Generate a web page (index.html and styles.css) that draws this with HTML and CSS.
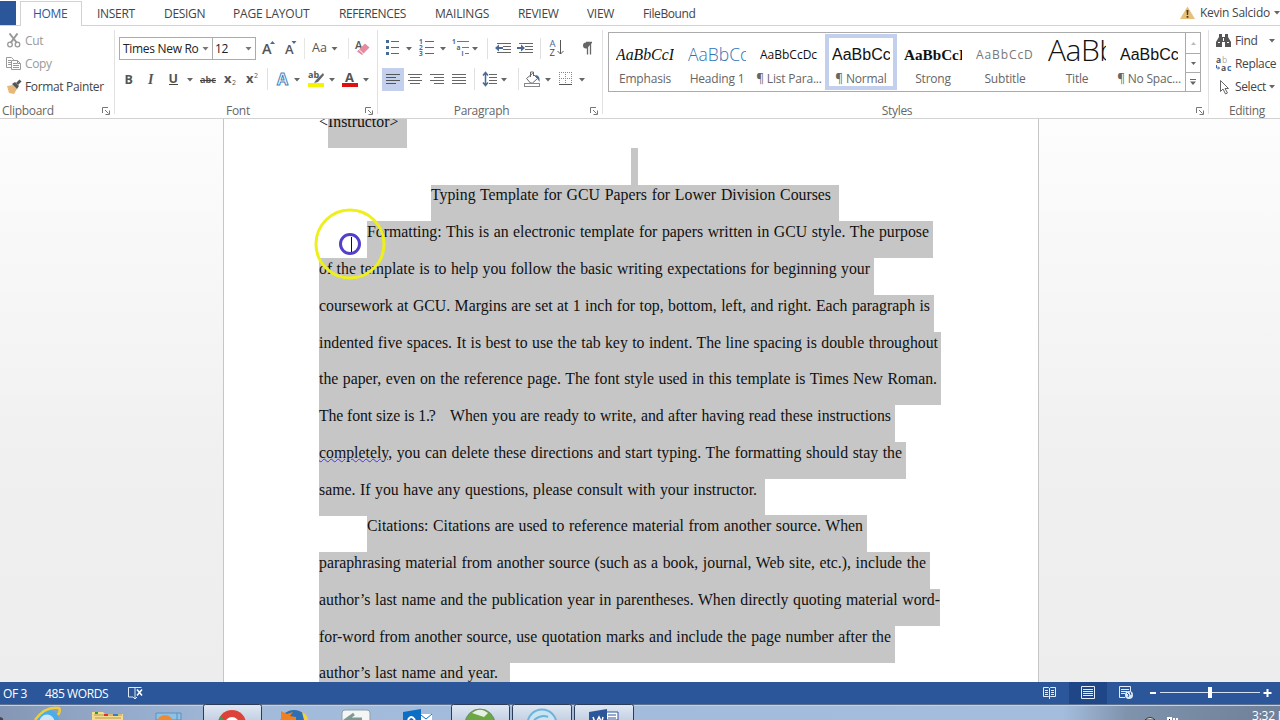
FILE: index.html
```html
<!DOCTYPE html>
<html lang="en">
<head>
<meta charset="utf-8">
<title>Word</title>
<link rel="stylesheet" href="styles.css">
</head>
<body>
<div class="app">
  <nav class="tabs">
    <span class="file"></span>
    <span class="tab active">HOME</span>
    <span class="tab t-insert">INSERT</span>
    <span class="tab t-design">DESIGN</span>
    <span class="tab t-layout">PAGE LAYOUT</span>
    <span class="tab t-refs">REFERENCES</span>
    <span class="tab t-mail">MAILINGS</span>
    <span class="tab t-review">REVIEW</span>
    <span class="tab t-view">VIEW</span>
    <span class="tab t-fb">FileBound</span>
    <span class="user">
      <svg width="15" height="13" viewBox="0 0 15 13"><path d="M7.5 0.5L15 13H0z" fill="#e8c078"/><path d="M6.5 4h2l-.4 5h-1.2z M6.6 10h1.8v1.8H6.6z" fill="#4a3a20"/></svg>
      <span class="uname">Kevin Salcido</span>
      <svg width="6" height="4" viewBox="0 0 6 4"><path d="M0 0h6L3 3.5z" fill="#666"/></svg>
    </span>
  </nav>

  <div class="ribbon">
    <section class="group clipboard">
      <div class="body">
        <div class="cmd dim"><svg width="16" height="16" viewBox="6 33 16 16"><path d="M9.500 33.500L17 43M17.500 33.500L10.500 43" stroke="#999" stroke-width="2" fill="none"/><circle cx="10" cy="44.500" r="2.300" fill="none" stroke="#999" stroke-width="1.300"/><circle cx="17.500" cy="44.500" r="2.300" fill="none" stroke="#999" stroke-width="1.300"/></svg><span>Cut</span></div>
        <div class="cmd dim"><svg width="16" height="16" viewBox="6 56 16 16"><path d="M6.500 57.500h5l2 2v8h-7z" fill="#fff" stroke="#999"/><path d="M8 60.500h3M8 62.500h3M8 64.500h3" stroke="#999"/><path d="M11.500 60.500h6l3 3v6h-9z" fill="#fff" stroke="#999"/><path d="M13 63.500h4M13 65.500h6M13 67.500h6M17.500 60.500v3h3" stroke="#999" fill="none"/></svg><span>Copy</span></div>
        <div class="cmd"><svg width="16" height="16" viewBox="6 78 16 16"><path d="M7 85l6-1 4 4-3 5-5-1z" fill="#e8b878"/><path d="M12 83l3-2 4 4-2 3z" fill="#555"/><path d="M16 82l3.500-3.500 2 2L18 84z" fill="#555"/></svg><span>Format Painter</span></div>
      </div>
      <div class="label">Clipboard<svg class="launch" width="8" height="8" viewBox="0 0 8 8"><path d="M.5 6V.5H6M3 3l3.500 3.500M7.500 3.500v4h-4" fill="none" stroke="#777"/></svg></div>
    </section>

    <section class="group font">
      <div class="body">
        <div class="row r1">
          <span class="combo face"><span>Times New Ro</span><svg width="7" height="4" viewBox="0 0 7 4"><path d="M.5 0h6l-3 3.500z" fill="#777"/></svg></span>
          <span class="combo size"><span>12</span><svg width="7" height="4" viewBox="0 0 7 4"><path d="M.5 0h6l-3 3.500z" fill="#777"/></svg></span>
          <svg width="26" height="23" viewBox="256 37 26 23"><text x="262" y="54" class="g g16">A</text><path d="M270 44l2.500-3 2.500 3z" fill="#476a96"/></svg>
          <svg width="22" height="23" viewBox="282 37 22 23"><text x="285" y="54" class="g g13">A</text><path d="M291.500 41h5l-2.500 3z" fill="#476a96"/></svg>
          <svg width="44" height="23" viewBox="304 37 44 23"><path d="M304.500 38v21" stroke="#e6e6e6"/><text x="312" y="52" class="g g12">Aa</text><path d="M331.500 47h6l-3 3.500z" fill="#666"/></svg>
          <svg width="28" height="23" viewBox="348 37 28 23"><path d="M348.500 38v21" stroke="#e6e6e6"/><text x="355" y="49" class="g g11">A</text><path d="M357 51.500l8-8 4.500 4-7.500 7.500z" fill="#e58a9f"/><path d="M359 49.500l4.500 4.500" stroke="#fff"/></svg>
        </div>
        <div class="row r2">
          <svg width="21" height="24" viewBox="119 67 21 24"><text x="124.500" y="83.500" class="g b g12">B</text></svg>
          <svg width="22" height="24" viewBox="140 67 22 24"><text x="148" y="83.500" class="g i g14">I</text></svg>
          <svg width="34" height="24" viewBox="162 67 34 24"><text x="168.500" y="83" class="g b g12">U</text><path d="M169 84.500h9" stroke="#444"/><path d="M187 78h6l-3 3.500z" fill="#666"/></svg>
          <svg width="23" height="24" viewBox="196 67 23 24"><text x="200" y="83" class="g b g10">abc</text><path d="M200 80.500h16" stroke="#444"/></svg>
          <svg width="22" height="24" viewBox="219 67 22 24"><text x="224" y="83" class="g b g13">x</text><text x="232" y="85" class="g g7">2</text></svg>
          <svg width="26" height="24" viewBox="241 67 26 24"><text x="246" y="83" class="g b g13">x</text><text x="254" y="78" class="g g7">2</text></svg>
          <svg width="38" height="24" viewBox="267 67 38 24"><path d="M267.500 68v22" stroke="#e0e0e0"/><text x="277" y="84.500" class="fx">A</text><path d="M294 78h6l-3 3.500z" fill="#666"/></svg>
          <svg width="35" height="24" viewBox="305 67 35 24"><rect x="308" y="83" width="16" height="4" fill="#f4f400"/><text x="308" y="78" class="g b g10">ab</text><path d="M323 73l-7 7-2 3 4-1 6-7z" fill="#666"/><path d="M329 78h6l-3 3.500z" fill="#666"/></svg>
          <svg width="37" height="24" viewBox="340 67 37 24"><rect x="342" y="83" width="16" height="4" fill="#e01010"/><text x="345" y="82" class="g b g13">A</text><path d="M363 78h6l-3 3.500z" fill="#666"/></svg>
        </div>
      </div>
      <div class="label">Font<svg class="launch" width="8" height="8" viewBox="0 0 8 8"><path d="M.5 6V.5H6M3 3l3.500 3.500M7.500 3.500v4h-4" fill="none" stroke="#777"/></svg></div>
    </section>

    <section class="group para">
      <div class="body">
        <div class="row r1">
          <svg width="33" height="23" viewBox="382 37 33 23"><path d="M386 41.500h3M386 47.500h3M386 53.500h3" stroke="#476a96" stroke-width="3"/><path d="M391 41.500h8M391 47.500h8M391 53.500h8" stroke="#666"/><path d="M406 47h6l-3 3.500z" fill="#666"/></svg>
          <svg width="35" height="23" viewBox="415 37 35 23"><text x="419" y="44" class="n">1</text><text x="419" y="50" class="n">2</text><text x="419" y="56" class="n">3</text><path d="M425 41.500h9M425 47.500h9M425 53.500h9" stroke="#666"/><path d="M440 47h6l-3 3.500z" fill="#666"/></svg>
          <svg width="37" height="23" viewBox="450 37 37 23"><text x="452" y="44" class="n">1</text><text x="456.500" y="50" class="n">a</text><text x="461.500" y="56" class="n">i</text><path d="M457 41.500h12M462 47.500h7M465 53.500h4" stroke="#777"/><path d="M472 47h6l-3 3.500z" fill="#666"/></svg>
          <svg width="27" height="23" viewBox="487 37 27 23"><path d="M487.500 38v21" stroke="#e0e0e0"/><path d="M497 43.500h14M503 46.500h8M503 49.500h8M497 52.500h14" stroke="#666"/><path d="M495 48l4-3.500V47h4v2h-4v2.500z" fill="#476a96"/></svg>
          <svg width="26" height="23" viewBox="514 37 26 23"><path d="M519 43.500h14M525 46.500h8M525 49.500h8M519 52.500h14" stroke="#666"/><path d="M525 48l-4-3.500V47h-4v2h4v2.500z" fill="#476a96"/></svg>
          <svg width="33" height="23" viewBox="540 37 33 23"><path d="M540.500 38v21" stroke="#e0e0e0"/><text x="549.500" y="47" class="az" fill="#476a96">A</text><text x="549.500" y="55.500" class="az" fill="#444">Z</text><path d="M560.500 40v14M557.500 51l3 3 3-3" stroke="#555" fill="none"/></svg>
          <svg width="24" height="23" viewBox="573 37 24 23"><path d="M592 42.500h-6a3 3 0 0 0 0 6h1z" fill="#666"/><path d="M587.500 42.500v12M590.500 42.500v12M586 42.500h6" stroke="#666" stroke-width="1.300"/></svg>
        </div>
        <div class="row r2">
          <svg width="22" height="24" viewBox="382 67 22 24"><rect x="382" y="68" width="22" height="23" fill="#c2d0ee"/><path d="M386 74.500h14M386 77.500h10M386 80.500h14M386 83.500h10" stroke="#555"/></svg>
          <svg width="22" height="24" viewBox="404 67 22 24"><path d="M408 74.500h14M410 77.500h10M408 80.500h14M410 83.500h10" stroke="#666"/></svg>
          <svg width="22" height="24" viewBox="426 67 22 24"><path d="M430 74.500h14M434 77.500h10M430 80.500h14M434 83.500h10" stroke="#666"/></svg>
          <svg width="26" height="24" viewBox="448 67 26 24"><path d="M452 74.500h14M452 77.500h14M452 80.500h14M452 83.500h14" stroke="#666"/></svg>
          <svg width="44" height="24" viewBox="474 67 44 24"><path d="M474.500 68v22" stroke="#e0e0e0"/><path d="M485.500 73v12M483 75.500l2.500-3 2.500 3M483 82.500l2.500 3 2.500-3" stroke="#476a96" stroke-width="1.500" fill="none"/><path d="M489 74.500h8M489 77.500h8M489 80.500h8M489 83.500h8" stroke="#666"/><path d="M501 78h6l-3 3.500z" fill="#666"/></svg>
          <svg width="36" height="24" viewBox="518 67 36 24"><path d="M518.500 68v22" stroke="#e0e0e0"/><path d="M526.500 78.500l6-5 5 5-5 4.500h-2z" fill="#fff" stroke="#666"/><path d="M530.500 77v-5h3v4" stroke="#666" fill="none"/><path d="M535 75c4 0 5 3 4.500 7l-2.500-4z" fill="#476a96"/><rect x="524.500" y="83.500" width="15" height="3" fill="#fff" stroke="#888"/><path d="M545 78h6l-3 3.500z" fill="#666"/></svg>
          <svg width="34" height="24" viewBox="554 67 34 24"><path d="M559 72.500h13M559 78.500h13M559.500 72v12M565.500 72v12M571.500 72v12" stroke="#888" stroke-dasharray="1 1"/><path d="M559 84.500h13" stroke="#555"/><path d="M579 78h6l-3 3.500z" fill="#666"/></svg>
        </div>
      </div>
      <div class="label">Paragraph<svg class="launch" width="8" height="8" viewBox="0 0 8 8"><path d="M.5 6V.5H6M3 3l3.500 3.500M7.500 3.500v4h-4" fill="none" stroke="#777"/></svg></div>
    </section>

    <section class="group styles">
      <div class="body">
        <div class="gallery">
          <div class="style"><span class="pv p-emph">AaBbCcI</span><span class="nm">Emphasis</span></div>
          <div class="style"><span class="pv p-h1">AaBbCc</span><span class="nm">Heading 1</span></div>
          <div class="style"><span class="pv p-list">AaBbCcDc</span><span class="nm">¶ List Para...</span></div>
          <div class="style sel"><span class="pv p-norm">AaBbCc</span><span class="nm">¶ Normal</span></div>
          <div class="style"><span class="pv p-strong">AaBbCcI</span><span class="nm">Strong</span></div>
          <div class="style"><span class="pv p-sub">AaBbCcD</span><span class="nm">Subtitle</span></div>
          <div class="style"><span class="pv p-title">AaBb</span><span class="nm">Title</span></div>
          <div class="style"><span class="pv p-nosp">AaBbCc</span><span class="nm">¶ No Spac...</span></div>
          <div class="scroller">
            <span><svg width="5" height="3" viewBox="0 0 5 3"><path d="M0 3h5L2.500 0z" fill="#bbb"/></svg></span>
            <span><svg width="5" height="3" viewBox="0 0 5 3"><path d="M0 0h5L2.500 3z" fill="#666"/></svg></span>
            <span><svg width="6" height="6" viewBox="0 0 6 6"><path d="M0 .5h6" stroke="#666"/><path d="M0 2.500h6L3 6z" fill="#666"/></svg></span>
          </div>
        </div>
      </div>
      <div class="label">Styles<svg class="launch" width="8" height="8" viewBox="0 0 8 8"><path d="M.5 6V.5H6M3 3l3.500 3.500M7.500 3.500v4h-4" fill="none" stroke="#777"/></svg></div>
    </section>

    <section class="group editing">
      <div class="body">
        <div class="cmd"><svg width="16" height="16" viewBox="1216 33 16 16"><path d="M1219 34h3v3h3v-3h3v3l3 5v5h-6v-5h-3v5h-6v-5l3-5z" fill="#555"/><path d="M1218 42.500h2M1227 42.500h2M1223.500 38v3" stroke="#fff"/></svg><span>Find</span><svg class="c1" width="6" height="4" viewBox="0 0 6 4"><path d="M0 0h6L3 3.500z" fill="#666"/></svg></div>
        <div class="cmd"><svg width="16" height="16" viewBox="1216 56 16 16"><text x="1216" y="63" class="g b g9">a</text><text x="1222" y="63" class="g9 lt">b</text><text x="1221" y="70.500" class="g b g9">a</text><text x="1227" y="70.500" class="g9 bl">c</text><path d="M1216.500 65v3h3M1218 66.500l1.500 1.500-1.500 1.500" stroke="#3a6db0" fill="none"/></svg><span>Replace</span></div>
        <div class="cmd"><svg width="16" height="16" viewBox="1216 78 16 16"><path d="M1220.500 79.500v11l2.500-2.500 2.500 5 2-1-2.500-4.500h3.500z" fill="#fff" stroke="#666"/></svg><span>Select</span><svg class="c2" width="6" height="4" viewBox="0 0 6 4"><path d="M0 0h6L3 3.500z" fill="#666"/></svg></div>
      </div>
      <div class="label">Editing</div>
    </section>
  </div>

  <main class="canvas">
    <article class="page">
      <div class="ln first"><span class="pre">&lt;</span><span class="hl w0">Instructor&gt;</span></div>
      <div class="ln blank"><span class="hl"></span></div>
      <div class="ln title"><span class="hl" style="width:400px">Typing Template for GCU Papers for Lower Division Courses</span></div>
      <div class="ln ind"><span class="hl e4" style="width:562px">Formatting: This is an electronic template for papers written in GCU style. The purpose</span></div>
      <div class="ln"><span class="hl e4" style="width:551px">of the template is to help you follow the basic writing expectations for beginning your</span></div>
      <div class="ln"><span class="hl e4" style="width:611px">coursework at GCU. Margins are set at 1 inch for top, bottom, left, and right. Each paragraph is</span></div>
      <div class="ln"><span class="hl e3" style="width:619px">indented five spaces. It is best to use the tab key to indent. The line spacing is double throughout</span></div>
      <div class="ln"><span class="hl e4" style="width:618px">the paper, even on the reference page. The font style used in this template is Times New Roman.</span></div>
      <div class="ln"><span class="hl e4" style="width:572px"><span class="lead">The font size is 1.<span class="cut">?</span></span><span class="rest">When you are ready to write, and after having read these instructions</span></span></div>
      <div class="ln"><span class="hl e4" style="width:583px"><span class="gram">completely,</span> you can delete these directions and start typing. The formatting should stay the</span></div>
      <div class="ln"><span class="hl" style="width:438px">same. If you have any questions, please consult with your instructor.</span></div>
      <div class="ln ind"><span class="hl e4" style="width:496px">Citations: Citations are used to reference material from another source. When</span></div>
      <div class="ln"><span class="hl e4" style="width:607px">paraphrasing material from another source (such as a book, journal, Web site, etc.), include the</span></div>
      <div class="ln"><span class="hl e0" style="width:621px">author’s last name and the publication year in parentheses. When directly quoting material word-</span></div>
      <div class="ln"><span class="hl e4" style="width:572px">for-word from another source, use quotation marks and include the page number after the</span></div>
      <div class="ln"><span class="hl e12" style="width:179px">author’s last name and year.</span></div>
    </article>
    <svg class="pointer" width="74" height="74" viewBox="0 0 74 74"><circle cx="37" cy="37" r="34" fill="none" stroke="#eef01c" stroke-width="3"/><circle cx="37" cy="37" r="9.500" fill="#fff" stroke="#5240c8" stroke-width="3"/><path d="M38.500 30v15" stroke="#111"/></svg>
  </main>

  <footer class="status">
    <span class="s-page">OF 3</span>
    <span class="s-words">485 WORDS</span>
    <svg class="s-proof" width="15" height="14" viewBox="0 0 15 14"><path d="M7 1.500H.5v9.500H5l2 2 2-2M7 2v10M7 1.500h6.500" fill="none" stroke="#dfe8f5"/><path d="M9 3.500l5 6M14 3.500l-5 6" stroke="#fff" stroke-width="1.500"/></svg>
    <span class="s-views">
      <svg width="39" height="22" viewBox="1030 682 39 22"><path d="M1043.500 687.500h5l1 1 1-1h5v9h-5l-1 1-1-1h-5zM1049.500 688v11M1045 690.500h3M1045 692.500h3M1045 694.500h3M1051 690.500h3M1051 692.500h3M1051 694.500h3" stroke="#e3ebf6" fill="none"/></svg>
      <svg width="38" height="22" viewBox="1069 682 38 22"><path d="M1069 682h38v22h-38z" fill="#1f4788"/><path d="M1081.500 686.500h13v12h-13zM1083 689.500h10M1083 691.500h10M1083 693.500h10M1083 695.500h10" stroke="#e3ebf6" fill="none"/></svg>
      <svg width="38" height="22" viewBox="1107 682 38 22"><path d="M1125 697.500h-5.500v-11h11v5M1121 689.500h8M1121 691.500h6M1121 693.500h4" stroke="#e3ebf6" fill="none"/><circle cx="1129" cy="695" r="4" fill="#dfe8f5"/><path d="M1127 693l2 2-1 2M1130 692l1 3" stroke="#2b579a" fill="none"/></svg>
      <svg width="135" height="22" viewBox="1145 682 135 22"><path d="M1150 693h6M1263.500 693h8M1267.500 689v8" stroke="#fff" stroke-width="2"/><path d="M1160 692.500h100" stroke="#d5e0f0"/><path d="M1208 687h4v11h-4z" fill="#fff"/></svg>
    </span>
  </footer>

  <div class="taskbar">
    <svg class="tasks" width="1280" height="16" viewBox="0 704 1280 16">
      <defs>
        <linearGradient id="bar"><stop offset="0" stop-color="#8496b4"/><stop offset=".08" stop-color="#93a8c8"/><stop offset=".2" stop-color="#a3bbdb"/><stop offset=".83" stop-color="#a5bddd"/><stop offset=".88" stop-color="#7f93ad"/><stop offset="1" stop-color="#6f8098"/></linearGradient>
        <linearGradient id="btn" x2="0" y2="1"><stop offset="0" stop-color="#dfe7f2"/><stop offset="1" stop-color="#bccbe0"/></linearGradient>
      </defs>
      <path d="M0 704h1280v16H0z" fill="url(#bar)"/>
      <path d="M0 704.500h1280" stroke="#5d718f"/><path d="M0 705.500h1280" stroke="#c2d1e6"/>
      <path d="M0 717q4 1 3 3H0z" fill="#445"/>
      <g fill="url(#btn)" stroke="#2d3c56"><rect x="203.500" y="704.500" width="58" height="20" rx="2"/><rect x="451.500" y="704.500" width="58" height="20" rx="2"/><rect x="512.500" y="704.500" width="59" height="20" rx="2"/><rect x="574.500" y="704.500" width="59" height="20" rx="2"/></g>
      <circle cx="47" cy="722" r="10" fill="#cfe6f6" stroke="#49aee8" stroke-width="5"/><path d="M35 720q10-14 24-12q2 3-1 7" stroke="#f0cc3c" stroke-width="2.500" fill="none"/>
      <path d="M92 712h11l2 2h18v7H92z" fill="#f3dc8e"/><path d="M94 715h28M95 718h26" stroke="#b59a50"/><path d="M95 713h3" stroke="#2a9a3a" stroke-width="2"/><path d="M104 715h4" stroke="#d33" stroke-width="2"/><path d="M113 715h5" stroke="#3c7cc0" stroke-width="2"/>
      <path d="M156 713h25v7h-25z" fill="#8cc2e6" stroke="#5b92c0"/><path d="M177 713v7" stroke="#5b92c0"/><circle cx="165" cy="723" r="8" fill="#ee8a34"/>
      <circle cx="232" cy="724" r="14" fill="#dd4238"/><path d="M218 724q0-5 3-8l6 8z" fill="#3a9e50"/><circle cx="232" cy="724" r="7" fill="#fff"/>
      <circle cx="294" cy="724" r="14" fill="#2b6fb5"/><path d="M281 720v-9l6 3 6-2-3 4 6 1v4z" fill="#f08020"/><path d="M302 712q6 3 6 8h-4z" fill="#f5d040"/>
      <rect x="342" y="710" width="28" height="14" rx="3" fill="#f4f6f6" stroke="#8ba0a8"/><path d="M362 719h-15l7-5" stroke="#7b9a94" stroke-width="3" fill="none"/>
      <path d="M403 712l18-3v11h-18z" fill="#0d6fc4"/><path d="M421 714h11v6h-11z" fill="#fff"/><path d="M421 715l5 4 6-5" stroke="#0d6fc4" fill="none"/><path d="M408 720q3-6 7 0" stroke="#fff" stroke-width="2" fill="none"/>
      <circle cx="480" cy="724" r="15" fill="#6ba844"/><path d="M472 713q8-7 16 0l-4 4z" fill="#e8f0e4"/><circle cx="480" cy="724" r="15" fill="none" stroke="#6d8b72"/>
      <circle cx="542" cy="724" r="14.500" fill="#c9e4f2" stroke="#6db4da" stroke-width="2"/><path d="M534 720q8-6 14-3" stroke="#6db4da" stroke-width="2" fill="none"/>
      <path d="M606 712h12v8h-12z" fill="#fff" stroke="#2b579a"/><path d="M608 715h8M608 718h8" stroke="#2b579a"/><path d="M589 712l18-3v11h-18z" fill="#2b579a"/><path d="M593 717l1.500 4M597 721l2-4 2 4M603 717l-1 4" stroke="#fff" stroke-width="1.500" fill="none"/>
      <path d="M1145 720q5-5 10 0z" fill="#eee" stroke="#333"/><path d="M1168 720v-2h3v2M1174 718v2M1177 718v2" stroke="#fff" stroke-width="2"/>
    </svg>
    <span class="clock">3:32 PM</span>
  </div>
</div>
</body>
</html>
```

FILE: styles.css
```css
* { box-sizing: border-box; }
body { margin: 0; width: 1280px; height: 720px; overflow: hidden; font-family: "Open Sans", "Noto Sans", sans-serif; font-size: 12px; color: #444; background: #fff; }
svg { display: block; flex: none; }
.app { display: flex; flex-direction: column; width: 1280px; height: 720px; overflow: hidden; }

.tabs { display: flex; height: 26px; flex: none; border-bottom: 1px solid #d2d2d2; line-height: 27px; white-space: nowrap; }
.file { width: 16px; height: 25px; margin-right: 4px; background: #2b579a; border-top: 1px solid #fff; }
.tab { flex: none; letter-spacing: -.3px; }
.active { width: 62px; height: 25px; padding-left: 12px; margin-top: 1px; line-height: 23px; color: #2b579a; background: #fff; border: 1px solid #d2d2d2; border-bottom: 0; }
.t-insert { width: 67px; padding-left: 15px; }
.t-design { width: 69px; padding-left: 15px; }
.t-layout { width: 106px; padding-left: 15px; letter-spacing: -.2px; }
.t-refs { width: 95px; padding-left: 15px; letter-spacing: -.4px; }
.t-mail { width: 83px; padding-left: 16px; letter-spacing: -.2px; }
.t-review { width: 69px; padding-left: 16px; }
.t-view { width: 56px; padding-left: 16px; }
.t-fb { width: 60px; padding-left: 16px; letter-spacing: -.4px; }
.user { display: flex; align-items: center; margin-left: auto; width: 100px; flex: none; }
.uname { width: 73px; margin: 0 4px 0 5px; letter-spacing: -.25px; }

.ribbon { display: flex; height: 93px; flex: none; border-bottom: 1px solid #d2d2d2; background: #fff; }
.group { display: flex; flex-direction: column; flex: none; position: relative; border-right: 1px solid #e1e1e1; margin: 4px 0 4px; height: 84px; }
.body { height: 71px; flex: none; }
.label { height: 17px; line-height: 20px; text-align: center; color: #666; letter-spacing: -.3px; position: relative; }
.launch { position: absolute; right: 4px; top: 6px; }
.clipboard { width: 115px; }
.clipboard .label { text-align: left; padding-left: 2px; }
.font { width: 263px; padding-left: 4px; }
.font .label { padding-right: 20px; }
.para { width: 225px; padding-left: 4px; }
.para .label { padding-right: 21px; }
.styles { width: 606px; padding-left: 5px; }
.styles .label { padding-right: 22px; }
.editing { width: 71px; border: 0; }
.editing .label { padding-left: 5px; }
.cmd { display: flex; align-items: center; height: 23px; padding-left: 6px; white-space: nowrap; letter-spacing: -.35px; }
.clipboard .body, .editing .body { margin-top: -1px; height: 72px; }
.cmd > span { margin-left: 3px; }
.cmd svg + span { line-height: 22px; }
.dim { color: #999; }
.editing .cmd { padding-left: 7px; }
.c1 { margin-left: 11px; }
.c2 { margin-left: 3px; }
.row { display: flex; }
.r1 { padding-top: 7px; height: 37px; }
.combo { display: flex; align-items: center; justify-content: space-between; flex: none; height: 23px; padding: 0 3px 0 3px; border: 1px solid #ababab; color: #222; white-space: nowrap; letter-spacing: -.3px; overflow: hidden; }
.face { width: 94px; }
.size { width: 43px; border-left: 0; padding-left: 2px; }
.g { fill: #555; font-family: "Open Sans", sans-serif; }
.i { font-style: italic; font-family: "Liberation Serif", serif; font-weight: 700; }
.g16 { font-size: 14.5px; font-weight: 600; } .g14 { font-size: 14px; } .g13 { font-size: 13px; font-weight: 600; } .g12 { font-size: 12.5px; } .g11 { font-size: 11px; font-weight: 600; } .g10 { font-size: 9px; } .g9 { font-size: 8.5px; } .g7 { font-size: 7px; }
.b { font-weight: 700; }
.lt { fill: #aaa; } .bl { fill: #3a6db0; font-weight: 700; }
.fx { font: 700 16px "Open Sans", sans-serif; fill: #fff; stroke: #4b84c0; stroke-width: 1px; }
.n { font: 700 6.5px "Open Sans", sans-serif; fill: #476a96; }
.az { font: 9.5px "Open Sans", sans-serif; }

.gallery { display: flex; width: 593px; height: 60px; margin-top: 2px; border: 1px solid #ababab; }
.style { display: flex; flex-direction: column; align-items: center; width: 72px; flex: none; }
.pv { display: block; width: 58px; height: 23px; margin-top: 7px; line-height: 28px; color: #111; overflow: hidden; white-space: nowrap; }
.nm { line-height: 18px; margin-top: 7px; color: #666; letter-spacing: -.2px; white-space: nowrap; }
.sel { border: 4px solid #c2d0ee; margin: 1px 0; }
.sel .pv { margin-top: 2px; flex: none; }
.p-emph { font: italic 15.8px/29px "Liberation Serif", serif; }
.p-h1 { font-size: 17.500px; font-weight: 300; color: #2e74b5; }
.p-list { font-size: 12px; line-height: 30px; }
.p-norm, .p-nosp { font: 16px/30px "Liberation Sans", sans-serif; }
.p-strong { font: 700 15.2px/29px "Liberation Serif", serif; }
.p-sub { font-size: 12px; line-height: 30px; letter-spacing: .9px; color: #777; }
.p-title { font-size: 30px; line-height: 19px; font-weight: 300; letter-spacing: -.5px; }
.scroller { display: grid; grid-template-rows: 20px 19px 19px; width: 15px; border-left: 1px solid #ababab; }
.scroller span { display: flex; align-items: center; justify-content: center; }
.scroller span + span { border-top: 1px solid #ababab; }

.canvas { position: relative; height: 563px; flex: none; overflow: hidden; display: flex; justify-content: center; padding-right: 18px; background: linear-gradient(#fdfdfd, #f0f0f0 60%, #ededed); }
.page { width: 816px; height: 563px; flex: none; padding-left: 95px; background: #fff; border: solid #c6c6c6; border-width: 0 1px; font: 15.8px/22px "Liberation Serif", serif; color: #111; }
.ln { display: flex; height: 36.75px; white-space: nowrap; }
.hl { display: block; box-sizing: content-box; flex: none; height: 37px; padding-right: 8px; background: #c6c6c6; text-align-last: justify; }
.e4 { padding-right: 4px; } .e3 { padding-right: 3px; } .e0 { padding-right: 0; } .e12 { padding-right: 12px; }
.first { margin-top: -8px; line-height: 21px; }
.w0 { width: 71px; }
.pre { width: 9px; }
.blank .hl { width: 7px; padding: 0; margin-left: 312px; }
.title { padding-left: 112px; line-height: 20px; }
.ind { padding-left: 48px; }
.lead { display: inline-block; width: 131px; text-align-last: left; vertical-align: top; letter-spacing: -.1px; }
.rest { display: inline-block; width: 441px; vertical-align: top; }
.cut { display: inline-block; margin-left: -1px; }
.gram { text-decoration: underline wavy #4a3ad0 1px; text-underline-offset: 0; }
.pointer { position: absolute; left: 313px; top: 88px; }

.status { display: flex; align-items: center; height: 22px; flex: none; background: #2b579a; color: #fff; }
.s-page { width: 42px; margin-left: 3px; letter-spacing: -.4px; white-space: nowrap; }
.s-words { width: 83px; letter-spacing: -.4px; white-space: nowrap; }
.s-views { display: flex; gap: 0; margin-left: auto; }
.taskbar { position: relative; height: 16px; flex: none; overflow: hidden; }
.clock { position: absolute; left: 1252px; top: 4px; color: #fff; line-height: 16px; white-space: nowrap; letter-spacing: -.2px; }
```
